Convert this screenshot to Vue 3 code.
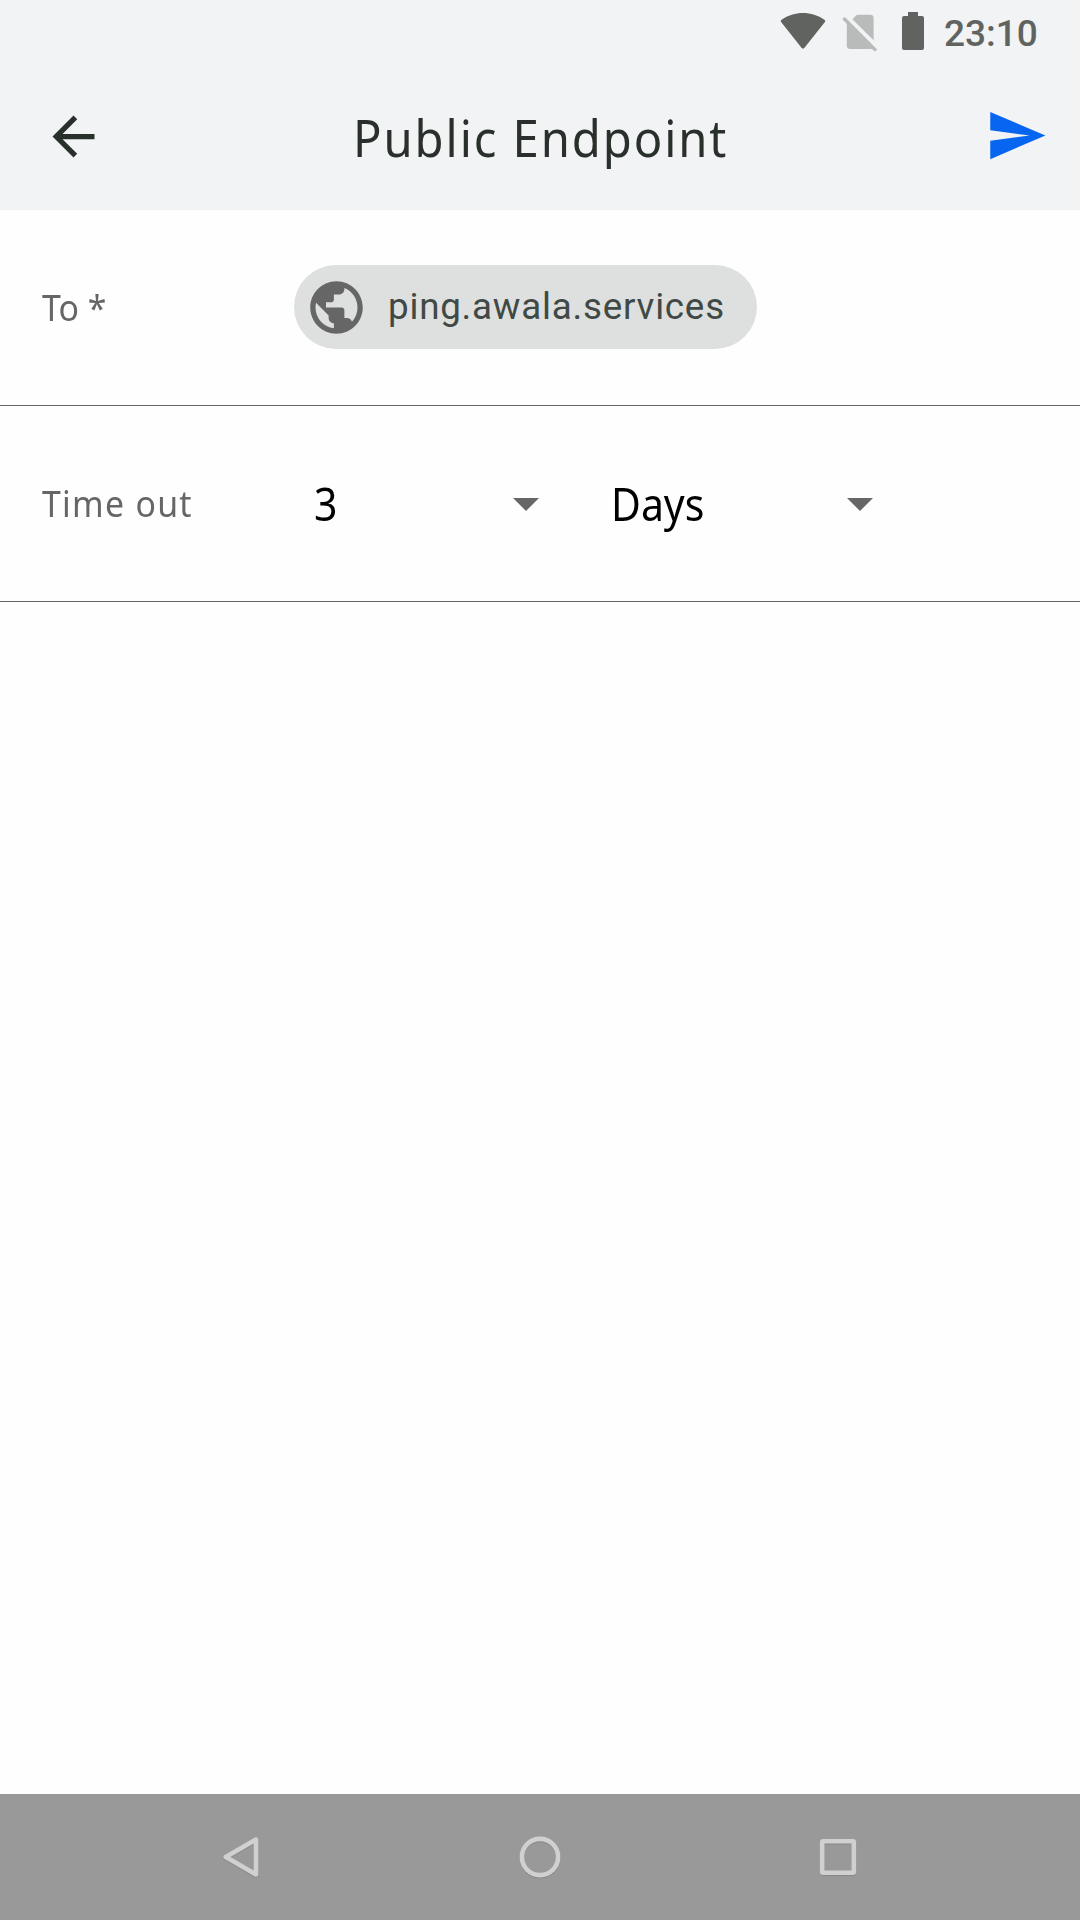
<script setup>
import { ref } from 'vue'

const recipient = ref('ping.awala.services')
const amount = ref('3')
const unit = ref('Days')
</script>

<template>
  <div class="screen">
    <header class="top">
      <div class="status">
        <svg class="wifi" width="46" height="38" viewBox="0 0 46 38">
          <path d="M1.3 10.2Q0 8.8 1.6 7.7C14-1.4 32-1.4 44.4 7.7Q46 8.8 44.7 10.2L24.3 35.9Q23 37.3 21.7 35.9Z" />
        </svg>
        <svg class="sim" width="36" height="38" viewBox="0 0 36 38">
          <path d="M10.4 5.2L13.8 1.7Q14.7.8 16 .8H28Q31.6.8 31.6 4V26.2ZM4.8 9.3L30 34.5Q29 35 28 35H8Q4.8 35 4.8 31.6Z" />
          <path class="slash" d="M2.4 5L33 35.6" />
        </svg>
        <svg class="battery" width="22" height="38" viewBox="0 0 22 38">
          <path d="M6 0h10v4h4q2 0 2 2v30q0 2-2 2H2q-2 0-2-2V6q0-2 2-2h4z" />
        </svg>
        <span class="clock">23:10</span>
      </div>
      <div class="toolbar">
        <svg class="back" viewBox="0 0 24 24">
          <path d="M20 11H7.83l5.59-5.59L12 4l-8 8 8 8 1.41-1.41L7.83 13H20v-2z" />
        </svg>
        <h1 class="title">Public Endpoint</h1>
        <svg class="send" viewBox="0 0 24 24">
          <path d="M2.01 21L23 12 2.01 3 2 10l15 2-15 2z" />
        </svg>
      </div>
    </header>

    <main class="form">
      <section class="row">
        <span class="label to">To *</span>
        <div class="chip">
          <svg class="globe" viewBox="0 0 24 24">
            <path d="M12 2C6.48 2 2 6.48 2 12s4.48 10 10 10 10-4.48 10-10S17.52 2 12 2zm-1 17.93c-3.95-.49-7-3.85-7-7.93 0-.62.08-1.21.21-1.79L9 15v1c0 1.1.9 2 2 2v1.93zm6.9-2.54c-.26-.81-1-1.39-1.9-1.39h-1v-3c0-.55-.45-1-1-1H8v-2h2c.55 0 1-.45 1-1V7h2c1.1 0 2-.9 2-2v-.41c2.93 1.19 5 4.06 5 7.41 0 2.08-.8 3.97-2.1 5.39z" />
          </svg>
          <span class="chip-text">{{ recipient }}</span>
        </div>
      </section>
      <section class="row">
        <span class="label timeout">Time out</span>
        <div class="select amount">
          <span class="value">{{ amount }}</span>
          <svg class="caret" viewBox="0 0 26 13"><path d="M0 0h26L13 13z" /></svg>
        </div>
        <div class="select unit">
          <span class="value">{{ unit }}</span>
          <svg class="caret" viewBox="0 0 26 13"><path d="M0 0h26L13 13z" /></svg>
        </div>
      </section>
    </main>

    <nav class="nav">
      <svg width="48" height="48" viewBox="0 0 48 48">
        <path d="M7.8 24L38 6.6V41.4Z" />
      </svg>
      <svg width="48" height="48" viewBox="0 0 48 48">
        <circle cx="24" cy="24" r="18.1" />
      </svg>
      <svg width="48" height="48" viewBox="0 0 48 48">
        <rect x="8.2" y="8.2" width="31.6" height="31.6" rx="1" />
      </svg>
    </nav>
  </div>
</template>

<style>
body {
  background: #fefefe;
}
</style>

<style scoped>
.screen {
  width: 1080px;
  height: 1920px;
  display: flex;
  flex-direction: column;
  overflow: hidden;
  background: #fefefe;
  font-family: "Noto Sans", "Open Sans", sans-serif;
}
svg {
  display: block;
  flex: none;
}
.top {
  height: 210px;
  background: #f2f3f5;
}
.status {
  height: 63px;
  display: flex;
  align-items: flex-start;
  padding-left: 780px;
  fill: #616361;
}
.wifi {
  margin-top: 12px;
}
.sim {
  margin: 14px 0 0 16px;
  fill: #b9bbba;
}
.slash {
  stroke: #b9bbba;
  stroke-width: 3.4;
  stroke-linecap: round;
}
.battery {
  margin: 12px 0 0 24px;
}
.clock {
  margin: 12px 0 0 20px;
  font: 500 37px/44px Roboto, sans-serif;
  color: #616361;
}
.toolbar {
  height: 147px;
  display: flex;
  align-items: center;
  padding: 0 32px 0 42px;
}
.back {
  width: 63px;
  height: 63px;
  fill: #29302c;
}
.title {
  width: 370px;
  margin: 2px auto 0 248px;
  font-size: 50.5px;
  line-height: 68px;
  font-weight: 430;
  letter-spacing: 2.05px;
  white-space: nowrap;
  color: #29302c;
  transform: scaleX(0.935);
  transform-origin: 0 50%;
}
.send {
  width: 63px;
  height: 63px;
  margin-bottom: 2px;
  fill: #0766ef;
}
.row {
  height: 195px;
  border-bottom: 1px solid #666;
  display: flex;
  align-items: center;
  padding-left: 42px;
}
.label {
  width: 252px;
  margin-bottom: 2px;
  font-size: 36.75px;
  line-height: 50px;
  white-space: nowrap;
  color: #666;
  transform: scaleX(0.92);
  transform-origin: 0 50%;
}
.timeout {
  letter-spacing: 1.4px;
}
.chip {
  height: 84px;
  width: 463px;
  margin-bottom: 2px;
  border-radius: 42px;
  background: #dee0df;
  display: flex;
  align-items: center;
  padding-left: 11px;
  box-sizing: border-box;
}
.globe {
  width: 63px;
  height: 63px;
  margin-top: 1px;
  fill: #666;
}
.chip-text {
  margin-left: 20px;
  font: 400 36.75px/44px Roboto, sans-serif;
  letter-spacing: 0.78px;
  color: #414946;
  white-space: nowrap;
}
.select {
  display: flex;
  align-items: center;
}
.amount {
  width: 224.5px;
  margin-left: 20px;
  justify-content: space-between;
}
.unit {
  width: 262px;
  margin-left: 72px;
  justify-content: space-between;
}
.value {
  margin-top: 1px;
  font-size: 45px;
  line-height: 60px;
  color: #000;
  transform: scaleX(0.91);
  transform-origin: 0 50%;
}
.caret {
  width: 26px;
  height: 13px;
  margin-top: 2px;
  fill: #666;
}
.nav {
  height: 126px;
  margin-top: auto;
  background: #999;
  display: flex;
  align-items: center;
  justify-content: space-between;
  padding: 0 218px;
}
.nav svg {
  fill: none;
  stroke: #d0d0d0;
  stroke-width: 4.6;
  stroke-linejoin: round;
  filter: drop-shadow(0 1px 0.5px rgba(0, 0, 0, 0.12));
}
</style>
